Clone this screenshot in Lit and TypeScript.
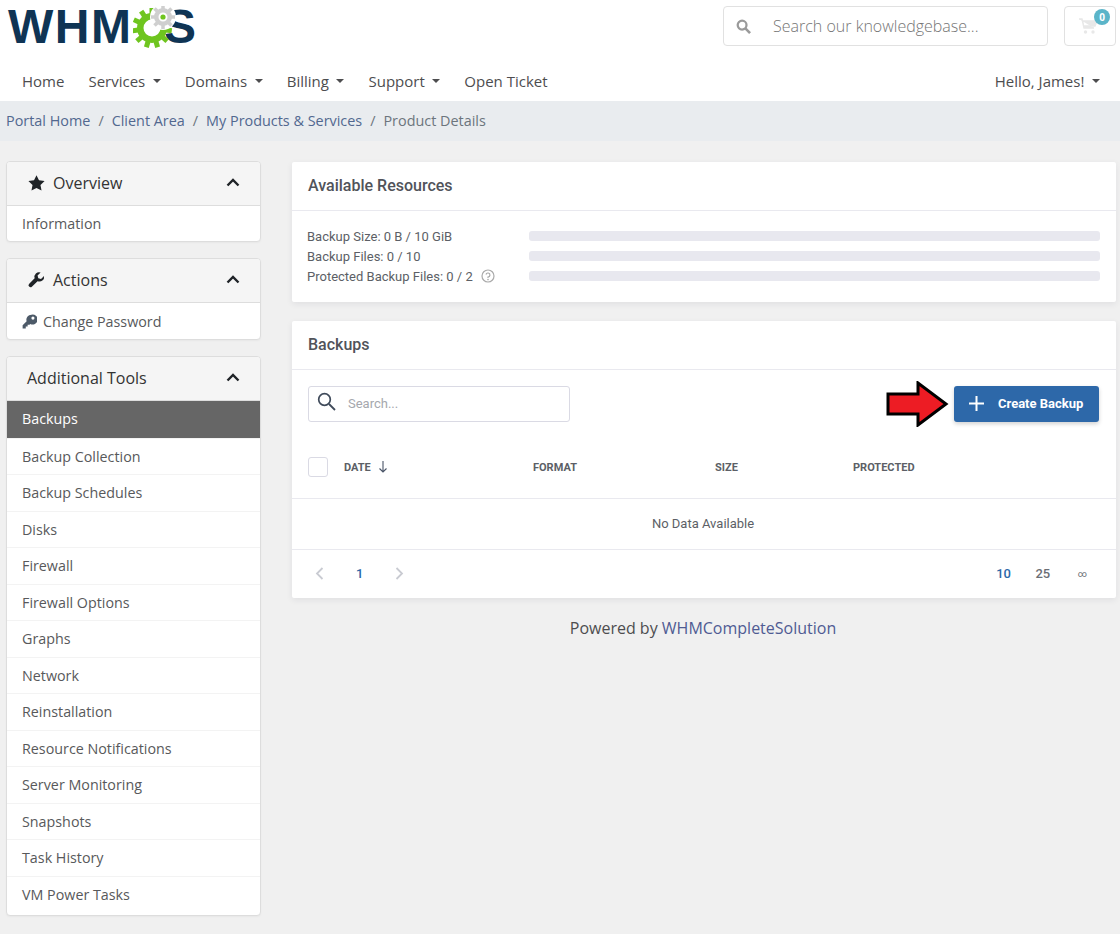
import { LitElement, html, css, svg } from "lit";
import { customElement } from "lit/decorators.js";

const gear = (cx: number, cy: number, r: number, hole: number, teeth: number, tw: number, th: number, color: string) => {
  const t = [];
  for (let i = 0; i < teeth; i++) {
    t.push(svg`<rect x="${cx - tw / 2}" y="${cy - r - th + 1}" width="${tw}" height="${th}" fill="${color}" transform="rotate(${(360 / teeth) * i} ${cx} ${cy})"></rect>`);
  }
  return svg`${t}<circle cx="${cx}" cy="${cy}" r="${(r + hole) / 2}" fill="none" stroke="${color}" stroke-width="${r - hole}"></circle>`;
};

const chevUp = html`<svg class="chev" viewBox="0 0 14 9"><path d="M1.5 7.5 7 2l5.5 5.5" fill="none" stroke="#1f2327" stroke-width="2.4"/></svg>`;

const ITEMS = ["Backups", "Backup Collection", "Backup Schedules", "Disks", "Firewall", "Firewall Options", "Graphs", "Network", "Reinstallation", "Resource Notifications", "Server Monitoring", "Snapshots", "Task History", "VM Power Tasks"];

@customElement("app-root")
export class AppRoot extends LitElement {
  static styles = css`
    :host { display: block; width: 1120px; height: 934px; overflow: hidden; background: #f0f0f0; font-family: "Open Sans", sans-serif; color: #58595b; font-size: 14px; }
    * { box-sizing: border-box; }
    .top { background: #fff; height: 101px; display: flex; flex-direction: column; }
    .brand { height: 62px; display: flex; justify-content: space-between; padding: 6px 4px 0 8px; }
    .logo { position: relative; width: 190px; height: 50px; display: flex; font-family: "Liberation Sans", sans-serif; }
    .logo-text { font-weight: 700; font-size: 48px; line-height: 54px; color: #0f3454; letter-spacing: 1.5px; margin-top: -6px; white-space: nowrap; }
    .logo-s { position: absolute; left: 156px; top: -6px; font-weight: 700; font-size: 48px; line-height: 54px; color: #0f3454; }
    .logo svg { position: absolute; left: 125px; top: 0; width: 45px; height: 44px; }
    .tools { display: flex; gap: 16px; }
    .kb { width: 325px; height: 40px; border: 1px solid #e1e1e1; border-radius: 4px; display: flex; align-items: center; padding-left: 12px; font-size: 16px; font-weight: 300; color: #757575; }
    .kb svg { width: 15px; height: 15px; margin-right: 22px; }
    .cart { position: relative; width: 52px; height: 40px; border: 1px solid #e1e1e1; border-radius: 4px; display: flex; align-items: center; justify-content: center; }
    .cart svg { width: 18px; height: 16px; margin-right: 5px; }
    .badge { position: absolute; top: 2px; right: 5px; width: 16px; height: 16px; border-radius: 50%; background: #5bb5c9; color: #fff; font-size: 10px; font-weight: 700; display: flex; align-items: center; justify-content: center; }
    nav { height: 39px; display: flex; align-items: center; gap: 24px; padding: 0 20px 2px 22px; font-size: 15px; color: #4d4d4f; }
    .dd { display: flex; align-items: center; }
    .dd::after { content: ""; margin-left: 7.6px; border-top: 4px solid #4d4d4f; border-left: 4px solid transparent; border-right: 4px solid transparent; }
    .push { margin-left: auto; }
    .crumbs { height: 40px; background: #e9ecef; display: flex; align-items: center; gap: 8px; padding: 0 0 2px 6px; font-size: 14.4px; color: #6c757d; }
    .crumbs a { color: #52688f; }
    .body { display: grid; grid-template-columns: 255px 824px; gap: 31px; padding: 20px 4px 0 6px; }
    aside { display: flex; flex-direction: column; gap: 16px; }
    .panel { background: #fff; border: 1px solid #ddd; border-radius: 4px; overflow: hidden; box-shadow: 0 1px 2px rgba(0,0,0,.04); }
    .panel.tall { padding-bottom: 3px; }
    .ph { height: 44px; background: #f5f5f5; border-bottom: 1px solid #ddd; display: flex; align-items: center; padding: 0 20px 2px 20px; font-size: 16px; color: #333; }
    .ph .ic { width: 19px; height: 18px; margin-right: 7px; }
    .chev { width: 14px; height: 9px; margin-left: auto; }
    .pi { height: 36.5px; display: flex; align-items: center; padding-left: 15px; font-size: 14.3px; color: #58595b; border-top: 1px solid #f3f3f3; }
    .pi.first { height: 35px; border-top: 0; padding-bottom: 1px; }
    .pi.second { height: 36px; border-top: 0; }
    .pi svg { width: 15px; height: 15px; margin-right: 6px; }
    .pi.on { background: #666; color: #fff; border-top: 0; padding-bottom: 1px; }
    main { display: flex; flex-direction: column; padding-top: 1px; }
    .card { background: #fff; box-shadow: 0 2px 6px rgba(40,40,60,.08); border-radius: 2px; font-family: Roboto, sans-serif; }
    .card + .card { margin-top: 19px; }
    .ch { height: 49px; border-bottom: 1px solid #e9e9ef; display: flex; align-items: center; padding: 0 0 2px 16px; font-size: 16px; font-weight: 500; color: #51535a; }
    .res { padding: 15px 16px 15px 15px; display: grid; grid-template-columns: 222px 1fr; font-size: 13px; color: #5c5f66; height: 91px; align-content: start; }
    .res > div { height: 20px; display: flex; align-items: center; }
    .bar { width: 100%; height: 10px; border-radius: 3px; background: #e8e8ef; }
    .q { width: 14px; height: 14px; margin-left: 8px; }
    .toolbar { display: flex; justify-content: space-between; align-items: center; height: 36px; margin-top: 16px; padding: 0 17px 0 16px; }
    .search { width: 262px; height: 36px; border: 1px solid #dadae4; border-radius: 3px; display: flex; align-items: center; padding: 0 0 2px 8px; font-size: 13px; color: #a5a7ad; }
    .search svg { width: 19px; height: 19px; margin: -3px 12px 0 0; }
    .act { display: flex; align-items: center; gap: 5px; }
    .arrow { width: 63px; height: 46px; margin: -5px 0; }
    .btn { width: 145px; height: 36px; background: #2d68a9; border-radius: 3px; color: #fff; font-size: 13px; font-weight: 700; display: flex; align-items: center; padding: 0 0 2px 15px; box-shadow: 0 2px 4px rgba(0,0,0,.18); }
    .btn svg { width: 15px; height: 15px; margin-right: 14px; }
    .thead { height: 61px; margin-top: 16px; display: grid; grid-template-columns: 36px 189px 182px 138px 1fr; align-items: center; padding: 0 0 2px 16px; border-bottom: 1px solid #e9e9ef; font-size: 11px; font-weight: 700; color: #5c5f66; }
    .box { width: 20px; height: 20px; border: 1px solid #dadae4; border-radius: 3px; }
    .date { display: flex; align-items: center; gap: 7px; }
    .date svg { width: 10px; height: 12px; }
    .empty { height: 51px; border-bottom: 1px solid #e9e9ef; display: flex; align-items: center; justify-content: center; padding: 0 2px 1px 0; font-size: 13px; color: #5c5f66; }
    .foot { height: 48px; display: flex; align-items: center; padding: 0 29px 1px 23px; font-size: 13px; font-weight: 500; }
    .foot svg { width: 9px; height: 13px; }
    .cur { color: #2d68a9; }
    .p1 { margin: 0 32px 0 32px; }
    .sizes { margin-left: auto; display: flex; gap: 24.5px; align-items: center; color: #6b6e75; }
    .inf { font-size: 9px; font-weight: 400; margin-left: 3px; }
    .powered { text-align: center; font-size: 16px; margin-top: 19px; padding-right: 2px; color: #4d4d4f; line-height: 22px; }
    .powered a { color: #4f5b93; }
  `;

  render() {
    return html`
      <div class="top">
        <div class="brand">
          <div class="logo">
            <span class="logo-text">WHM</span>
            <span class="logo-s">S</span>
            <svg viewBox="0 0 45 44">
              ${gear(19, 22, 15, 8.5, 11, 5, 6, "#6fc51f")}
              <circle cx="30" cy="11" r="13" fill="#fff"></circle>
              ${gear(30, 11, 9, 4.5, 8, 3.5, 4, "#cfcfcf")}
              <circle cx="30" cy="11" r="2.6" fill="#6fc51f"></circle>
            </svg>
          </div>
          <div class="tools">
            <div class="kb">
              <svg viewBox="0 0 16 16"><circle cx="6.5" cy="6.5" r="4.7" fill="none" stroke="#9a9a9a" stroke-width="2.4"/><path d="m10 10 5 5" stroke="#9a9a9a" stroke-width="2.8"/></svg>
              Search our knowledgebase...
            </div>
            <div class="cart">
              <svg viewBox="0 0 18 16"><path d="M0 1h3l2 9h10M4 3h14l-2 5H5" fill="#e8e8e8" stroke="#e8e8e8" stroke-width="1.4"/><circle cx="6.5" cy="14" r="1.7" fill="#e8e8e8"/><circle cx="14" cy="14" r="1.7" fill="#e8e8e8"/></svg>
              <span class="badge">0</span>
            </div>
          </div>
        </div>
        <nav>
          <span>Home</span><span class="dd">Services</span><span class="dd">Domains</span><span class="dd">Billing</span><span class="dd">Support</span><span>Open Ticket</span>
          <span class="dd push">Hello, James!</span>
        </nav>
      </div>
      <div class="crumbs"><a>Portal Home</a><span>/</span><a>Client Area</a><span>/</span><a>My Products &amp; Services</a><span>/</span><span>Product Details</span></div>
      <div class="body">
        <aside>
          <div class="panel">
            <div class="ph">
              <svg class="ic" viewBox="0 0 24 24"><path d="m12 1.5 3.3 6.9 7.5 1-5.5 5.2 1.4 7.5L12 18.5l-6.7 3.6 1.4-7.5L1.2 9.4l7.5-1z" fill="#1f2327"/></svg>
              Overview ${chevUp}
            </div>
            <div class="pi first">Information</div>
          </div>
          <div class="panel">
            <div class="ph">
              <svg class="ic" viewBox="0 0 24 24"><path d="M22 6.5 18 10.5l-3.6-1-1-3.6L17.5 2a6.2 6.2 0 0 0-8 7.6L2 17.2a2.7 2.7 0 0 0 3.8 3.8l7.6-7.5A6.2 6.2 0 0 0 22 6.5z" fill="#1f2327"/></svg>
              Actions ${chevUp}
            </div>
            <div class="pi second">
              <svg viewBox="0 0 24 24"><path d="M15 1a8 8 0 0 0-7.6 10.5L1 18v5h5v-3h3v-3h3l1.2-1.2A8 8 0 1 0 15 1zm2.5 8a2.5 2.5 0 1 1 0-5 2.5 2.5 0 0 1 0 5z" fill="#4d5a68"/></svg>
              Change Password
            </div>
          </div>
          <div class="panel tall">
            <div class="ph">Additional Tools ${chevUp}</div>
            ${ITEMS.map((t, i) => html`<div class="pi ${i === 0 ? "on" : ""}">${t}</div>`)}
          </div>
        </aside>
        <main>
          <div class="card">
            <div class="ch">Available Resources</div>
            <div class="res">
              <div>Backup Size: 0 B / 10 GiB</div><div><span class="bar"></span></div>
              <div>Backup Files: 0 / 10</div><div><span class="bar"></span></div>
              <div>Protected Backup Files: 0 / 2
                <svg class="q" viewBox="0 0 14 14"><circle cx="7" cy="7" r="6" fill="none" stroke="#aaa" stroke-width="1.2"/><path d="M5 5.5A2 2 0 1 1 7 8v1" fill="none" stroke="#aaa" stroke-width="1.2"/><circle cx="7" cy="10.6" r=".8" fill="#aaa"/></svg>
              </div><div><span class="bar"></span></div>
            </div>
          </div>
          <div class="card">
            <div class="ch">Backups</div>
            <div class="toolbar">
              <div class="search">
                <svg viewBox="0 0 19 19"><circle cx="7.5" cy="7.5" r="5.8" fill="none" stroke="#3f4a5a" stroke-width="1.7"/><path d="m12 12 6 6" stroke="#3f4a5a" stroke-width="1.8"/></svg>
                Search...
              </div>
              <div class="act">
                <svg class="arrow" viewBox="0 0 63 46"><path d="M2 13h30V2l28 21-28 21V33H2z" fill="#ed1c24" stroke="#000" stroke-width="3"/></svg>
                <div class="btn"><svg viewBox="0 0 15 15"><path d="M7.5 0v15M0 7.5h15" stroke="#fff" stroke-width="2"/></svg>Create Backup</div>
              </div>
            </div>
            <div class="thead">
              <span class="box"></span>
              <span class="date">DATE <svg viewBox="0 0 10 12"><path d="M5 0v11M1.5 7.5 5 11l3.5-3.5" fill="none" stroke="#4a5568" stroke-width="1.1"/></svg></span>
              <span>FORMAT</span><span>SIZE</span><span>PROTECTED</span>
            </div>
            <div class="empty">No Data Available</div>
            <div class="foot">
              <svg viewBox="0 0 9 13"><path d="M7.5 1 2 6.5 7.5 12" fill="none" stroke="#c9cbd2" stroke-width="1.8"/></svg>
              <span class="cur p1">1</span>
              <svg viewBox="0 0 9 13"><path d="M1.5 1 7 6.5 1.5 12" fill="none" stroke="#c9cbd2" stroke-width="1.8"/></svg>
              <div class="sizes"><span class="cur">10</span><span>25</span><span class="inf">∞</span></div>
            </div>
          </div>
          <div class="powered">Powered by <a>WHMCompleteSolution</a></div>
        </main>
      </div>
    `;
  }
}
